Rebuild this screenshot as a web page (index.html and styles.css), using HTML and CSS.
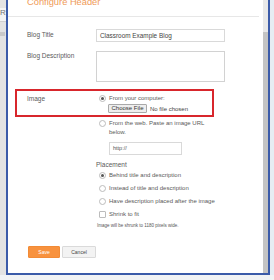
FILE: index.html
```html
<!DOCTYPE html>
<html lang="en">
<head>
  <meta charset="UTF-8">
  <title>Configure Header</title>
  <link rel="stylesheet" href="styles.css">
</head>
<body>
  <div class="page-left">
    <div class="edge-r">R</div>
    <div class="edge-btn"></div>
  </div>

  <div class="frame">
    <div class="dialog">
      <div class="dialog-head"><h1>Configure Header</h1></div>

      <div class="form">
        <div class="row">
          <div class="label">Blog Title</div>
          <div class="input">Classroom Example Blog</div>
        </div>

        <div class="row desc">
          <div class="label">Blog Description</div>
          <div class="textarea"></div>
        </div>

        <!-- highlighted part -->
        <div class="row highlight">
          <div class="label">Image</div>
          <div>
            <div class="option"><span class="radio on"></span><span>From your computer:</span></div>
            <div class="file">
              <span class="file-btn">Choose File</span>
              <span class="file-name">No file chosen</span>
            </div>
          </div>
        </div>

        <div class="row web">
          <div></div>
          <div>
            <div class="option"><span class="radio"></span><span class="option-text">From the web. Paste an image URL below.</span></div>
            <div class="url">http://</div>
          </div>
        </div>

        <div class="row placement">
          <div></div>
          <div>
            <div class="label">Placement</div>
            <div class="option first"><span class="radio on"></span><span>Behind title and description</span></div>
            <div class="option"><span class="radio"></span><span>Instead of title and description</span></div>
            <div class="option"><span class="radio"></span><span>Have description placed after the image</span></div>
            <div class="option"><span class="check"></span><span>Shrink to fit</span></div>
            <div class="note">Image will be shrunk to 1180 pixels wide.</div>
          </div>
        </div>

        <div class="actions">
          <button class="btn save">Save</button>
          <button class="btn cancel">Cancel</button>
        </div>
      </div>
    </div>
    <div class="scrollbar"><div class="thumb"></div></div>
  </div>

  <div class="page-right"></div>
</body>
</html>
```

FILE: styles.css
```css
* {
  box-sizing: border-box;
}

body {
  margin: 0;
  width: 274px;
  height: 280px;
  overflow: hidden;
  display: flex;
  align-items: flex-start;
  background: #f1f3f5;
  font-family: "Liberation Sans", Arial, sans-serif;
  color: #555;
}

/* page behind the dialog */
.page-left {
  width: 6px;
  height: 275px;
  background: #e3e3e3;
  overflow: hidden;
}

.edge-r {
  margin-top: 8px;
  font-size: 8px;
  line-height: 9px;
  color: #777;
  background: #f4f4f4;
  padding-bottom: 4px;
  border-bottom: 1px solid #d0d0d0;
}

.edge-btn {
  width: 5px;
  height: 4px;
  margin-top: 10px;
  background: #c9c9c9;
}

.page-right {
  width: 4px;
  height: 275px;
  background: #e6edf3;
}

.frame {
  width: 264px;
  height: 275px;
  display: flex;
  border: 2px solid #3b5ba9;
  border-top: 0;
  background: #fff;
}

.dialog {
  flex: 1;
}

.scrollbar {
  width: 5px;
  background: #e8e8e8;
  display: flex;
  flex-direction: column;
}

.thumb {
  margin-top: 32px;
  flex: 1;
  background: #c4c4c4;
}

.dialog-head {
  height: 17px;
  margin-right: 4px;
  border-bottom: 1px solid #e7e7e7;
  overflow: hidden;
}

.dialog-head h1 {
  margin: -4px 0 0 19px;
  font-size: 9.3px;
  line-height: 12px;
  font-weight: normal;
  color: #ef9a58;
}

.form {
  padding: 12px 0 0 19px;
}

.row {
  display: grid;
  grid-template-columns: 69px 1fr;
}

.label {
  font-size: 6.5px;
  line-height: 9px;
  padding-top: 1px;
  color: #5a5a5a;
}

.input {
  width: 129px;
  height: 13px;
  border: 1px solid #d9d9d9;
  padding-left: 3px;
  font-size: 6.4px;
  line-height: 11px;
  color: #444;
}

.desc {
  margin-top: 9px;
}

.desc .label {
  padding-top: 0;
}

.textarea {
  width: 129px;
  height: 31px;
  border: 1px solid #d2d2d2;
  background: linear-gradient(135deg, transparent 80%, #cfcfcf 80%, #cfcfcf 86%, transparent 86%) no-repeat right 1px bottom 1px / 4px 4px;
}

.highlight {
  margin: 7px 0 0 -12px;
  width: 199px;
  border: 2px solid #d8262c;
  padding: 3px 0 2px 10px;
}

.highlight .label {
  padding-top: 0;
}

.option {
  display: flex;
  align-items: flex-start;
  font-size: 6px;
  line-height: 9px;
  color: #5a5a5a;
}

.radio {
  flex: none;
  width: 7px;
  height: 7px;
  margin: 1px 3px 0 3px;
  border: 1px solid #bcbcbc;
  border-radius: 50%;
  background: #fff;
}

.radio.on::after {
  content: "";
  display: block;
  width: 3px;
  height: 3px;
  margin: 1px;
  border-radius: 50%;
  background: #555;
}

.check {
  flex: none;
  width: 7px;
  height: 7px;
  margin: 1px 3px 0 3px;
  border: 1px solid #bcbcbc;
  border-radius: 1px;
}

.file {
  display: flex;
  align-items: center;
  margin: 1px 0 0 12px;
  font-size: 6px;
}

.file-btn {
  width: 39px;
  height: 9px;
  border: 1px solid #a9a9a9;
  border-radius: 1px;
  background: #eee;
  line-height: 7px;
  text-align: center;
  color: #333;
}

.file-name {
  margin-left: 3px;
  color: #444;
}

.web {
  margin-top: 2px;
}

.option-text {
  width: 100px;
}

.url {
  width: 73px;
  height: 13px;
  margin: 5px 0 0 13px;
  border: 1px solid #d9d9d9;
  padding-left: 3px;
  font-size: 5.5px;
  line-height: 11px;
  color: #555;
}

.placement {
  margin-top: 5px;
}

.placement .label {
  padding-top: 0;
}

.placement .option {
  margin-top: 4px;
}

.placement .option.first {
  margin-top: 2px;
}

.note {
  margin: 4px 0 0 1px;
  font-size: 4.5px;
  line-height: 6px;
  color: #555;
}

.actions {
  display: flex;
  gap: 2px;
  margin: 17px 0 0 1px;
}

.btn {
  height: 12px;
  padding: 0;
  border-radius: 1px;
  font-family: inherit;
  font-size: 5px;
  line-height: 10px;
}

.save {
  width: 32px;
  border: 1px solid #f28b36;
  background: #f8923e;
  color: #fff;
}

.cancel {
  width: 34px;
  border: 1px solid #dadada;
  background: #f3f3f3;
  color: #444;
}
```
